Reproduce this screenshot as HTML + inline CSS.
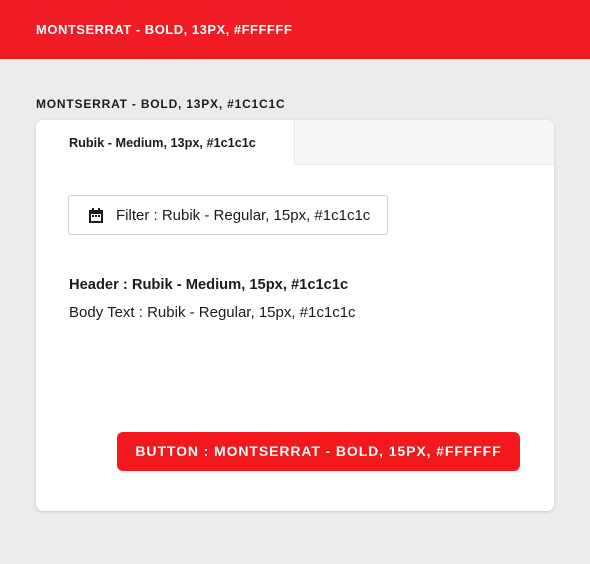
<!DOCTYPE html>
<html><head><style>
body{margin:0;width:590px;height:564px;background:#ececec;font-family:"Liberation Sans",sans-serif;position:relative;overflow:hidden;color:#1c1c1c}
.top{position:absolute;left:0;top:0;width:590px;height:59px;background:#f01c24}
.t1{position:absolute;left:36px;top:22px;color:#fff;font-weight:bold;font-size:13px;letter-spacing:0.5px}
.t2{position:absolute;left:36px;top:97px;font-weight:bold;font-size:12px;letter-spacing:0.8px}
.card{position:absolute;left:36px;top:120px;width:518px;height:391px;background:#fff;border-radius:7px;box-shadow:0 1px 3px rgba(0,0,0,.15);overflow:hidden}
.tab2{position:absolute;left:258px;top:0;width:260px;height:44px;background:#f7f7f7;border-left:1px solid #e8e8e8;border-bottom:1px solid #ececec}
.tabt{position:absolute;left:33px;top:16px;font-size:12.7px;font-weight:bold}
.filter{position:absolute;left:32px;top:75px;width:318px;height:38px;border:1px solid #ccc;border-radius:3px}
.filter span{position:absolute;left:47px;top:11px;font-size:15px}
.h{position:absolute;left:33px;top:157px;font-size:14.7px;font-weight:bold}
.b{position:absolute;left:33px;top:184px;font-size:15px}
.btn{position:absolute;left:81px;top:312px;width:403px;height:39px;background:#f2181c;border-radius:6px;color:#fff;font-weight:bold;font-size:14px;line-height:39px;text-align:center;letter-spacing:0.9px}
</style></head><body>
<div class="top"></div>
<div class="t1">MONTSERRAT - BOLD, 13PX, #FFFFFF</div>
<div class="t2">MONTSERRAT - BOLD, 13PX, #1C1C1C</div>
<div class="card">
<div class="tab2"></div>
<div class="tabt">Rubik - Medium, 13px, #1c1c1c</div>
<div class="filter">
<svg style="position:absolute;left:19px;top:12px" width="16" height="16" viewBox="0 0 16 16"><rect x="1" y="2" width="14" height="13" fill="#1c1c1c"/><rect x="3" y="6" width="10" height="7" fill="#fff"/><rect x="4" y="0" width="2" height="3" fill="#1c1c1c"/><rect x="10" y="0" width="2" height="3" fill="#1c1c1c"/><rect x="4" y="7" width="2" height="2" fill="#1c1c1c"/><rect x="7" y="7" width="2" height="2" fill="#1c1c1c"/><rect x="10" y="7" width="2" height="2" fill="#1c1c1c"/></svg>
<span>Filter : Rubik - Regular, 15px, #1c1c1c</span></div>
<div class="h">Header : Rubik - Medium, 15px, #1c1c1c</div>
<div class="b">Body Text : Rubik - Regular, 15px, #1c1c1c</div>
<div class="btn">BUTTON : MONTSERRAT - BOLD, 15PX, #FFFFFF</div>
</div>
</body></html>
